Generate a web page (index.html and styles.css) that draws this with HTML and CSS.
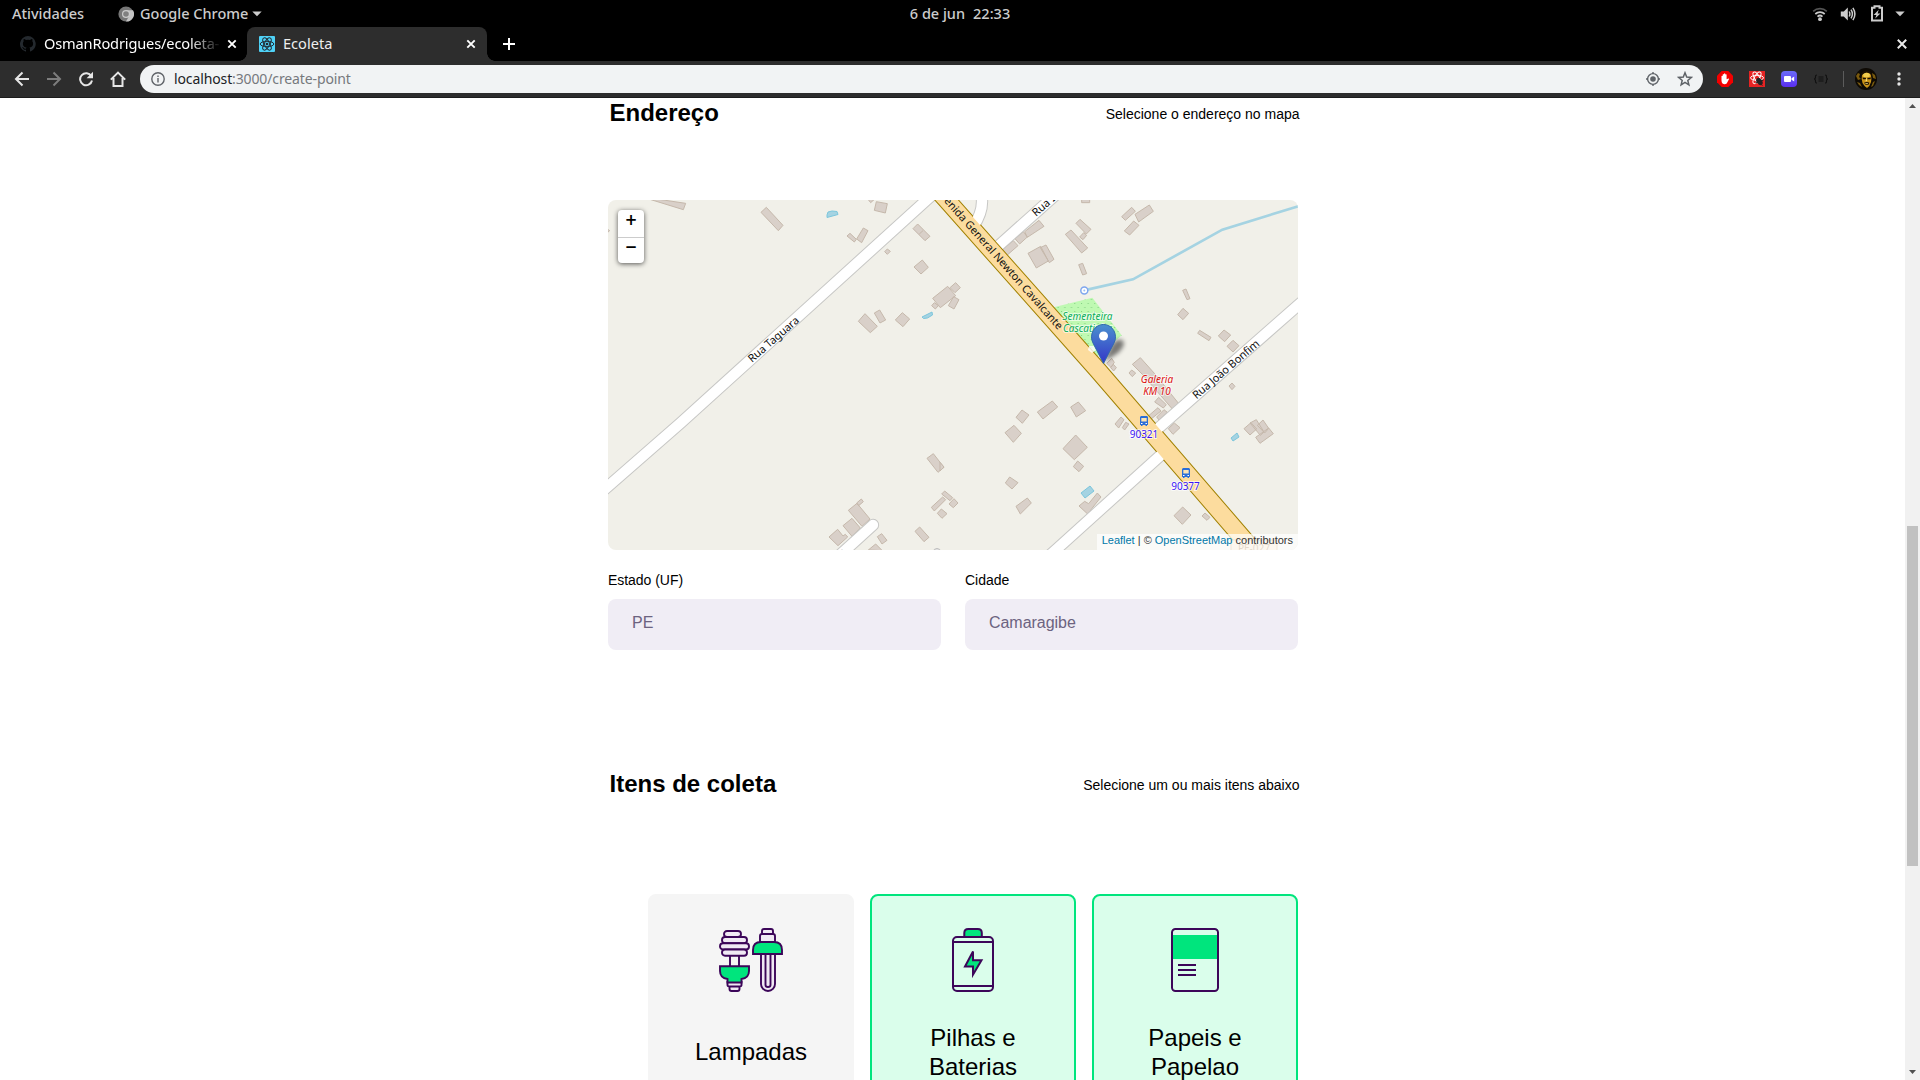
FILE: index.html
```html
<!DOCTYPE html>
<html lang="pt-BR">
<head>
<meta charset="utf-8">
<title>Ecoleta</title>
<link rel="stylesheet" href="styles.css">
</head>
<body>
<header class="topbar">
  <div class="topbar-left">
    <span class="activities">Atividades</span>
    <svg class="app-icon" width="16" height="16" viewBox="0 0 16 16"><circle cx="8" cy="8" r="7.6" fill="#777"/><path d="M8 4.2h7a7.6 7.6 0 0 1-7 11.4l3.4-6z" fill="#c4c4c4"/><circle cx="8" cy="8" r="4" fill="#ccc"/><circle cx="8" cy="8" r="2.8" fill="#808080"/></svg>
    <span class="app-name">Google Chrome</span>
    <svg class="caret" width="10" height="6" viewBox="0 0 10 6"><path d="M.3.5h9.4L5 5.2z" fill="#ccc"/></svg>
  </div>
  <div class="clock"><span>6 de jun</span><span>22:33</span></div>
  <div class="status">
    <svg width="16" height="16" viewBox="0 0 16 16" fill="none"><path d="M1.2 5.3a10 10 0 0 1 13.6 0" stroke="#555" stroke-width="1.7"/><path d="M3.3 8a7 7 0 0 1 9.4 0M5.5 10.6a3.8 3.8 0 0 1 5 0" stroke="#ccc" stroke-width="1.7"/><circle cx="8" cy="13.2" r="1.9" fill="#ccc"/></svg>
    <svg width="16" height="16" viewBox="0 0 16 16" fill="none" stroke="#ccc" stroke-width="1.5"><path d="M.8 5.5h3l4-4v13l-4-4h-3z" fill="#ccc" stroke="none"/><path d="M9.2 5.5q1.4 2.5 0 5M11 3.7q2.8 4.3 0 8.6M12.9 1.8q4 6.2 0 12.4"/></svg>
    <svg width="14" height="17" viewBox="0 0 14 17" fill="none"><path d="M2 2.8h2.5V1.3h5v1.5H12v12.7H2z" stroke="#ccc" stroke-width="2"/><path d="M8.7 4.8 3.6 10h2.8l-1.2 3.6L10.4 8.4H7.6z" fill="#ccc"/></svg>
    <svg width="10" height="6" viewBox="0 0 10 6"><path d="M.3.5h9.4L5 5.2z" fill="#ccc"/></svg>
  </div>
</header>

<nav class="tabs">
  <div class="tab tab-idle">
    <svg width="16" height="16" viewBox="0 0 16 16"><path fill="#24292e" d="M8 0a8 8 0 0 0-2.5 15.6c.4.1.5-.2.5-.4v-1.500c-2.200.5-2.700-1-2.700-1-.4-.9-.9-1.200-.9-1.200-.7-.5.1-.5.1-.5.8.1 1.200.8 1.200.8.7 1.300 1.900.9 2.300.7.1-.5.3-.9.5-1.100-1.800-.2-3.600-.9-3.600-4 0-.9.3-1.600.8-2.200-.1-.2-.4-1 .1-2.100 0 0 .7-.2 2.200.8a7.600 7.600 0 0 1 4 0c1.500-1 2.200-.8 2.200-.8.4 1.100.2 1.900.1 2.100.5.6.8 1.300.8 2.200 0 3.100-1.900 3.700-3.700 3.900.3.300.6.8.6 1.500v2.300c0 .2.100.5.500.4A8 8 0 0 0 8 0z"/></svg>
    <span class="tab-title tab-fade">OsmanRodrigues/ecoleta-</span>
    <svg class="tab-close" width="10" height="10" viewBox="0 0 10 10"><path d="m1.300 1.300 7.400 7.400m0-7.400L1.300 8.700" stroke="#fff" stroke-width="1.900"/></svg>
  </div>
  <div class="tab tab-active">
    <svg width="16" height="16" viewBox="0 0 16 16" fill="none" stroke="#222b33" stroke-width="1"><rect width="16" height="16" rx="1" fill="#4fd2f7" stroke="none"/><ellipse cx="8" cy="8" rx="6.800" ry="2.700"/><ellipse cx="8" cy="8" rx="6.800" ry="2.700" transform="rotate(60 8 8)"/><ellipse cx="8" cy="8" rx="6.800" ry="2.700" transform="rotate(120 8 8)"/><circle cx="8" cy="8" r="1.300" fill="#222b33" stroke="none"/></svg>
    <span class="tab-title">Ecoleta</span>
    <svg class="tab-close" width="10" height="10" viewBox="0 0 10 10"><path d="m1.300 1.300 7.400 7.400m0-7.400L1.300 8.700" stroke="#fff" stroke-width="1.900"/></svg>
  </div>
  <svg class="tab-new" width="12" height="12" viewBox="0 0 12 12"><path d="M6 0v12M0 6h12" stroke="#fff" stroke-width="2"/></svg>
  <svg class="window-close" width="10" height="10" viewBox="0 0 10 10"><path d="m.8.8 8.400 8.400m0-8.400L.8 9.200" stroke="#e8e8e8" stroke-width="2"/></svg>
</nav>

<div class="toolbar">
  <div class="nav-buttons">
    <svg width="16" height="16" viewBox="0 0 16 16" fill="none" stroke="#e6e6e6" stroke-width="2"><path d="M15 8H2.500M8.500 1.500 2 8l6.500 6.500"/></svg>
    <svg width="16" height="16" viewBox="0 0 16 16" fill="none" stroke="#7d7d7d" stroke-width="2"><path d="M1 8h12.500M7.500 1.500 14 8l-6.500 6.500"/></svg>
    <svg width="16" height="16" viewBox="0 0 16 16" fill="none" stroke="#e6e6e6" stroke-width="2"><path d="M13.300 5.200a6 6 0 1 0 .7 4.300"/><path d="M15 .8v6.400H8.600z" fill="#e6e6e6" stroke="none"/></svg>
    <svg width="16" height="16" viewBox="0 0 16 16" fill="none" stroke="#e6e6e6" stroke-width="2"><path d="M.8 8.600 8 1.600l7.200 7M3.500 7v8h9V7"/></svg>
  </div>
  <div class="omnibox">
    <svg width="14" height="14" viewBox="0 0 14 14" fill="none" stroke="#5f6368" stroke-width="1.400"><circle cx="7" cy="7" r="6.200"/><path d="M7 6v4.500M7 3.500v1.500"/></svg>
    <span class="url"><b>localhost</b>:3000/create-point</span>
    <svg class="locate" width="16" height="16" viewBox="0 0 16 16" fill="none" stroke="#5f6368" stroke-width="1.400"><circle cx="8" cy="8" r="5.400"/><circle cx="8" cy="8" r="2.800" fill="#5f6368" stroke="none"/><path d="M8 1v2M8 13v2M1 8h2M13 8h2"/></svg>
    <svg width="16" height="16" viewBox="0 0 16 16" fill="none" stroke="#5f6368" stroke-width="1.500"><path d="m8 1.800 1.700 4.300 4.600.3-3.500 3 1.100 4.500L8 11.400l-3.900 2.500 1.100-4.500-3.500-3 4.600-.3z"/></svg>
  </div>
  <div class="extensions">
    <svg width="16" height="16" viewBox="0 0 16 16"><path d="M4.700 0h6.600L16 4.700v6.600L11.300 16H4.700L0 11.300V4.700z" fill="#f40000"/><path d="M4.500 8V5q.6-.7 1.200 0V3.500q.7-.8 1.300 0v-.8q.7-.8 1.300 0v.9q.7-.7 1.300 0v4.700l1.800-.9q1 0 .7.700L9.700 12.500q-2 1.300-4.200 0-1-1-1-3z" fill="#fff"/></svg>
    <svg width="16" height="16" viewBox="0 0 16 16" fill="none" stroke="#fff" stroke-width="1"><path d="M0 0h16v16H0z" fill="#e62323" stroke="none"/><ellipse cx="8" cy="6.800" rx="6.500" ry="2.500"/><ellipse cx="8" cy="6.800" rx="6.500" ry="2.500" transform="rotate(60 8 6.800)"/><ellipse cx="8" cy="6.800" rx="6.500" ry="2.500" transform="rotate(120 8 6.800)"/><ellipse cx="10.500" cy="10.500" rx="2.600" ry="4" transform="rotate(-35 10.500 10.500)" fill="#222" stroke="none"/><path d="m6.500 12 8-3M7 9.500l6.500 5" stroke="#222"/></svg>
    <svg width="16" height="16" viewBox="0 0 16 16"><defs><linearGradient id="cam" x2="0" y2="1"><stop stop-color="#6b6cf7"/><stop offset="1" stop-color="#5a2df0"/></linearGradient></defs><rect width="16" height="16" rx="4" fill="url(#cam)"/><rect x="3" y="5" width="7" height="6" rx="1" fill="#fff"/><path d="m10.500 7.200 2.700-1.700v5l-2.700-1.700z" fill="#fff"/></svg>
    <svg width="16" height="16" viewBox="0 0 16 16" fill="none" stroke="#111" stroke-width="1.100"><path d="M4 4q-1.600 0-1.500 1.700Q2.600 8 1 8q1.600 0 1.500 2.300Q2.400 12 4 12M12 4q1.600 0 1.500 1.700Q13.400 8 15 8q-1.600 0-1.500 2.300Q13.600 12 12 12M5.500 6h5M5.500 8h5M5.500 10h5"/></svg>
    <span class="divider"></span>
    <svg class="avatar" width="22" height="22" viewBox="0 0 22 22"><circle cx="11" cy="11" r="11" fill="#0e0a04"/><path d="m1 8 2-3 2 1-1 3 2 2-3 1zM17 5l3 2 1 4-3-1zM2 14l3 1 2 4-3-2zM18 14l2-1-2 5-2 1z" fill="#7a5a0e"/><path d="M7 7q1-3 4.500-3T16 7q1 3 0 7-1 4-4 6-3-2-4.500-5Q6 11 7 7z" fill="#c99318"/><path d="M8 6q3-2.500 7 0l-.5 3h-6z" fill="#f2cd4e"/><path d="M7.500 9.500 11 10v1.200H8zM12.500 10l3.500-.5-.5 1.700h-3zM9 14.800q3-1.500 5.500 0l-1 2h-3zM6 6q3-5 8-3 4 2 3 8l-1.500-5Q11 2.500 7 7z" fill="#1a1004"/><path d="m11.200 9 1 4-1.700.4zM10 15.300h3.200l-.5.8h-2z" fill="#f7dc7a"/></svg>
    <svg class="menu-dots" width="4" height="14" viewBox="0 0 4 14" fill="#e6e6e6"><circle cx="2" cy="2" r="1.700"/><circle cx="2" cy="7" r="1.700"/><circle cx="2" cy="12" r="1.700"/></svg>
  </div>
</div>

<div class="viewport">
  <main class="form">
    <div class="legend legend-address">
      <h2>Endereço</h2>
      <span>Selecione o endereço no mapa</span>
    </div>

    <div class="map">
      <svg class="map-canvas" width="690" height="350" viewBox="608 200 690 350">
        <defs>
          <path id="taguara" d="M-150 1044 24 889 243 698 980 30l50-45"/>
          <path id="avenida" d="M-34-30 20 30 473 540 940 1081"/>
          <path id="ruaj" d="M178 165 380-15"/>
          <path id="curva" d="M126 10V36Q126 70 100 110"/>
          <path id="bonfim" d="M650 719 1073 347l60-52"/>
          <path id="baixo" d="M665 793 347 1080l-40 36"/>
          <path id="fim" d="M819 1005 700 1113"/>
          <path id="avenida-label" d="M-60-46 354 421l60 68"/>
          <pattern id="dots" width="20" height="24" patternUnits="userSpaceOnUse"><path d="M3 3h3v3H3zM13 15h3v3h-3z" fill="#7fce80"/></pattern>
          <linearGradient id="pin" x2="0" y2="1"><stop stop-color="#4a90cf"/><stop offset="1" stop-color="#3436c8"/></linearGradient>
          <filter id="soft" x="-50%" y="-50%" width="200%" height="200%"><feGaussianBlur stdDeviation="2.200"/></filter>
        </defs>
        <path d="M608 200h690v350H608z" fill="#f1f0e9"/>

        <g transform="translate(940 190) scale(.33333)">
          <path d="m335 353 122-30 88 113-78 66-60-48z" fill="#bff9b2"/>
          <path d="m335 353 122-30 88 113-78 66-60-48z" fill="url(#dots)"/>
          <path d="m442 299 137-31 268-149 240-74" fill="none" stroke="#a5d3e2" stroke-width="8"/>
        </g>

        <g class="building" transform="translate(600 190) scale(.33333)">
          <path d="m150 24 107 16-7 19-110-34zM483 67l16-15 50 54-14 16zM829 35l33 6-6 28-33-8zM804 28l8 10 10-9zM741 138l9-8 19 18-6 8zM770 147l20-33 14 8-19 36zM854 185l8-8 9 7-9 9zM939 116l14-14 37 37-15 13zM958 132l11-10M942 231l25-21 18 22-22 20zM1050 293l17-15 14 15-16 15zM998 325l45-36 24 28-46 36zM995 347l8-9 12 9-9 10zM1045 347l16-27 16 9-15 28zM775 394l20-23 37 38-21 19zM823 369l16-9 18 30-17 9zM886 390l21-22 22 19-20 23zM981 805l19-14 32 41-18 15zM1025 912l9-9 24 20-8 9zM1047 942l15-16 12 13-14 14zM994 952l34-31 9 8-34 34zM1012 970l12-13 17 14-15 14zM945 1024l14-13 28 31-15 13zM745 961l26-21 39 47-24 22zM770 939l14-12 6 8-14 12zM729 1007l27-22 25 29-25 25zM687 1041l26-23 16 20 7-5 7 8-29 26zM832 1040l13-9 16 20-15 11zM805 1080l22-18 20 20zM20 116l9 6-6 5z"/>
        </g>
        <g class="building" transform="translate(940 190) scale(.33333)">
          <path d="M425 20h24v18h-24zM545 80l30-28 11 12-30 27zM585 73l43-28 12 19-44 32zM553 123l28-30 16 13-28 29zM408 100l12-12 33 30-14 14zM419 141l12-13 9 8-11 13zM376 133l17-13 50 54-18 15zM254 125l43-34 15 18-50 33zM225 146l25-21 12 16-23 21zM186 180l34-28 14 15-32 28zM301 173l17-8 24 43-14 10zM264 190l38-21 23 44-36 21zM416 224l12-4 12 31-12 4zM728 301l10-4 12 29-9 3zM713 374l16-19 17 15-17 19zM773 430l6-9 34 21-6 10zM835 438l17-18 20 15-18 20zM861 469l18-18 18 16-18 19zM500 520l15-15 8 12-10 15zM512 533l8-10 9 10-8 10zM567 549l8-9 12 9-10 11zM577 523l24-20 43 48 74 92-21 14-90-104z"/>
        </g>
        <g class="building" transform="translate(940 370) scale(.33333)">
          <path d="M292 126l45-33 16 18-44 36zM392 111l23-15 22 26-28 19zM228 142l18-22 21 15-20 25zM195 188l27-22 22 24-24 27zM369 236l38-41 35 37-39 37zM400 290l13-17 18 16-14 16zM196 339l13-18 25 17-18 19zM228 409l34-25 12 15-33 33zM0 277l12 14-12 12zM417 408l17-14 12 7 26-32 11 12-27 34-12 18zM702 437l26-26 25 24-26 28zM786 438l9-9 15 13-9 9zM644 96l12-14 23 22-9 10zM626 137l28-24 9 10-32 26zM650 141l22-22 10 8-25 23zM685 176l18-17 17 14-21 20zM525 162l18-21 9 8-16 25zM547 173l10-16 10 5-13 18zM867 48l9-9 9 10-9 10zM912 176l21-18 17 19-20 18zM930 159l19-10 23 37-11 10zM952 166l17-16 17 25-12 14zM947 202l39-28 14 17-40 29z"/>
        </g>
        <g class="pond">
          <path d="m827 215 1-3 4-1 5 .5 1 3-11 3zM922 317l10-5 .5 3-5 3-4 .5z"/>
          <path d="m1081 493 9-7 4 5-9 7zM1231 438l6-5 2 4-6 4z"/>
        </g>

        <g fill="none" stroke-width="37" stroke="#c7c7c5">
          <g transform="translate(600 190) scale(.33333)"><use href="#taguara"/><use href="#fim" stroke-linecap="round"/></g>
          <g transform="translate(940 190) scale(.33333)"><use href="#ruaj"/><use href="#curva"/><use href="#bonfim"/><use href="#baixo"/><use href="#avenida" stroke="#a18100" stroke-width="56"/></g>
        </g>
        <g fill="none" stroke-width="31" stroke="#fff">
          <g transform="translate(600 190) scale(.33333)"><use href="#taguara"/><use href="#fim" stroke-linecap="round"/></g>
          <g transform="translate(940 190) scale(.33333)"><use href="#ruaj"/><use href="#curva"/><use href="#bonfim"/><use href="#baixo"/><use href="#avenida" stroke="#fcdc9e" stroke-width="50"/></g>
        </g>
        <circle cx="937" cy="552" r="3.500" fill="#e5e5e5" stroke="#bbb"/>

        <circle cx="1084.300" cy="290.500" r="3.500" fill="#fff" stroke="#7fa6ee" stroke-width="1.500"/><circle cx="1084.300" cy="290.500" r="1" fill="#9cbcf4"/>

        <g class="road-label">
          <text transform="translate(752 363) rotate(-41)" textLength="63.500">Rua Taguara</text>
          <g transform="translate(940 190) scale(.33333)"><text class="avenue-label"><textPath href="#avenida-label" startOffset="624" text-anchor="end">Avenida General Newton Cavalcante</textPath></text></g>
          <text transform="translate(1036 217) rotate(-41)">Rua I</text>
          <text transform="translate(1196.500 399.500) rotate(-40.700)" textLength="84">Rua João Bonfim</text>
          <text transform="translate(842 557) rotate(-41)">a</text>
        </g>
        <g class="place-label green"><text x="1087.500" y="319.500">Sementeira</text><text x="1087.500" y="331.500">Cascatinha</text></g>
        <g class="place-label red"><text x="1157" y="382.500">Galeria</text><text x="1157" y="394.500">KM 10</text></g>
        <g class="stop-label"><text x="1144" y="438">90321</text><text x="1185.500" y="490">90377</text></g>
        <g id="bus" fill="#2a6ed8"><path d="M1141 416h6l1 1v8h-1v1h-1.500v-1h-3v1h-1.500v-1h-1v-8z"/><path d="M1141.300 418h5.400v3.500h-5.400z" fill="#fbe3b4"/><path d="M1141 423h1.500v1H1141zM1145.500 423h1.500v1h-1.500z" fill="#fff"/></g>
        <use href="#bus" x="42" y="52"/>
        <g><path d="M1231 540h46v15h-46z" fill="#f6e3c8" stroke="#c9ad84"/><text x="1254" y="552" class="shield">PE-027</text></g>

        <path d="m1104 362 7-16q5-8 11-6 5 4-4 13z" fill="#000" opacity=".5" filter="url(#soft)"/>
        <path d="M1089 346h5l2 4-4 3-4-3z" fill="#fff" opacity=".8"/>
        <path d="M1103.500 363.500 1093 343a12 12.500 0 1 1 21 0z" fill="url(#pin)" stroke="#2f69ad" stroke-width="1"/>
        <circle cx="1103.500" cy="336" r="4.500" fill="#fff"/>
      </svg>
      <div class="zoom"><span>+</span><span>−</span></div>
      <div class="attribution"><a>Leaflet</a> | © <a>OpenStreetMap</a> contributors</div>
    </div>

    <div class="fields">
      <label>Estado (UF)<span class="select">PE</span></label>
      <label>Cidade<span class="select">Camaragibe</span></label>
    </div>

    <div class="legend legend-items">
      <h2>Itens de coleta</h2>
      <span>Selecione um ou mais itens abaixo</span>
    </div>

    <ul class="items">
      <li>
        <svg width="64" height="64" viewBox="0 0 64 64" fill="none" stroke="#3c0659" stroke-width="1.900">
          <g fill="#f0e9f4"><rect x="5" y="3" width="17" height="6" rx="3"/><rect x="3" y="9" width="25" height="6.300" rx="3"/><rect x="1" y="15.300" width="29" height="6.200" rx="3"/><rect x="3" y="21.500" width="25" height="6.300" rx="3"/></g>
          <path d="M11 28v10M20 28v10"/>
          <path d="M8.500 54v3q0 1.500 2 1.500V61q0 2 2 2h6q2 0 2-2v-2.500q2 0 2-1.500v-3zM10 58.500h11" fill="#f0e9f4"/>
          <path d="M1 38.300h29V43q0 7-7.500 8v3.500h-14V51Q1 50 1 43z" fill="#00e57d"/>
          <path d="M42 26h14v30a7 7 0 0 1-14 0z" fill="#f0e9f4"/><path d="M46.500 26v31q0 2 2.500 2t2.500-2V26"/>
          <path d="M43 6V3q0-2 2-2h7q2 0 2 2v3q2 0 2 2v6H41V8q0-2 2-2zM43 6h11" fill="#f0e9f4"/>
          <path d="M34 26v-4q0-8 8-8h13q8 0 8 8v4z" fill="#00e57d"/>
        </svg>
        <span class="item-title item-single">Lampadas</span>
      </li>
      <li class="selected">
        <svg width="64" height="64" viewBox="0 0 64 64" fill="none" stroke="#3c0659" stroke-width="2">
          <path d="M23.300 9V5q0-4 4-4h9.500q4 0 4 4v4z" fill="#00e57d"/>
          <rect x="12" y="9" width="40" height="54" rx="4"/><path d="M12 14h40M12 58h40"/>
          <path d="M32 23.500v8.800h8.500L32 46.700v-8.200h-8z" fill="#00e57d"/>
        </svg>
        <span class="item-title">Pilhas e Baterias</span>
      </li>
      <li class="selected">
        <svg width="64" height="64" viewBox="0 0 64 64" fill="none" stroke="#3c0659" stroke-width="2">
          <path d="M10 7h44v24H10z" fill="#00e57d" stroke="none"/>
          <rect x="9" y="1" width="46" height="62" rx="3.500"/><path d="M15 37h18M15 42h18M15 47h18"/>
        </svg>
        <span class="item-title">Papeis e Papelao</span>
      </li>
    </ul>
  </main>
  <div class="scrollbar">
    <svg width="7" height="4" viewBox="0 0 7 4"><path d="M3.500 0 7 4H0z" fill="#505050"/></svg>
    <div class="track"><div class="thumb"></div></div>
    <svg width="7" height="4" viewBox="0 0 7 4"><path d="M3.500 4 7 0H0z" fill="#505050"/></svg>
  </div>
</div>
</body>
</html>
```
FILE: styles.css
```css
* { box-sizing: border-box; margin: 0; padding: 0; }
html, body { height: 1080px; overflow: hidden; }
body { display: flex; flex-direction: column; background: #fff; font-family: "Liberation Sans", Arial, sans-serif; color: #000; }
svg { display: block; flex: none; }

/* desktop bar */
.topbar { height: 27px; flex: none; display: grid; grid-template-columns: 1fr auto 1fr; align-items: center; background: #000; color: #ccc; font: 500 14.500px/27px "Noto Sans", sans-serif; }
.topbar-left { display: flex; align-items: center; padding-left: 12px; }
.activities { width: 106px; }
.app-name { margin: 0 5px 0 6px; width: 107px; white-space: nowrap; }
.clock { display: flex; gap: 8px; }
.status { display: flex; align-items: center; justify-content: flex-end; padding-right: 15px; }
.status svg:nth-child(1) { margin-right: 12px; }
.status svg:nth-child(2) { margin-right: 14px; }
.status svg:nth-child(3) { margin-right: 11px; }

/* browser tabs */
.tabs { height: 34px; flex: none; display: flex; align-items: center; background: #000; color: #fff; font: 14.600px/32px "Noto Sans", sans-serif; }
.tab { height: 34px; display: flex; align-items: center; }
.tab-idle { width: 247px; padding: 0 10px 0 20px; }
.tab-active { position: relative; width: 240px; padding: 0 11px 0 12px; background: #2d2d2d; border-radius: 8px 8px 0 0; color: #eee; }
.tab-active::before, .tab-active::after { content: ""; position: absolute; bottom: 0; width: 8px; height: 8px; }
.tab-active::before { left: -8px; background: radial-gradient(circle at 0 0, transparent 7.500px, #2d2d2d 8px); }
.tab-active::after { right: -8px; background: radial-gradient(circle at 100% 0, transparent 7.500px, #2d2d2d 8px); }
.tab-title { height: 34px; margin-left: 8px; flex: 1; white-space: nowrap; overflow: hidden; }
.tab-fade { letter-spacing: -.15px; -webkit-mask-image: linear-gradient(90deg, #000 82%, transparent); mask-image: linear-gradient(90deg, #000 82%, transparent); }
.tab-idle .tab-close { margin-left: 6px; }
.tab-new { margin-left: 16px; }
.window-close { margin: 0 13px 0 auto; }

/* address bar */
.toolbar { height: 37px; flex: none; display: flex; align-items: center; background: #2d2d2d; border-bottom: 1px solid #1c1c1c; }
.nav-buttons { display: flex; gap: 16px; width: 140px; padding-left: 14px; }
.omnibox { width: 1563px; height: 28px; display: flex; align-items: center; padding: 0 10px 0 11px; border-radius: 14px; background: #f1f3f4; }
.url { margin-left: 9px; color: #76797d; font: 14px/28px "Noto Sans", sans-serif; letter-spacing: -.12px; }
.url b { font-weight: 400; color: #202124; }
.locate { margin: 0 16px 0 auto; }
.extensions { flex: 1; display: flex; align-items: center; gap: 16px; padding-left: 14px; }
.divider { width: 1px; height: 16px; background: #5c5c5c; margin-left: -2px; }
.avatar { margin-left: -5px; }
.menu-dots { margin-left: 4px; }

/* page */
.viewport { flex: 1; min-height: 0; display: flex; overflow: hidden; }
.form { width: 690px; margin: 0 607px 0 608px; flex: none; }
.legend { display: flex; justify-content: space-between; align-items: center; height: 28px; margin-left: 1.500px; width: 690px; }
.legend h2 { font-size: 24px; line-height: 28px; }
.legend span { font-size: 14px; line-height: 16px; }
.legend-address h2 { padding-top: 2px; }
.legend-address span { padding-top: 3px; }
.legend-items { margin-top: 120px; }
.legend-items span { padding-top: 1px; }

.map { position: relative; width: 690px; height: 350px; margin-top: 74px; border-radius: 8px; overflow: hidden; }
.building path { fill: #d9d0c9; stroke: #c5b8ab; stroke-width: 3; }
.pond path { fill: #a5d3e2; stroke: #7cc6dc; stroke-width: 1; }
.map text { font-family: "Noto Sans", sans-serif; }
.road-label { font-size: 11px; fill: #111; }
.avenue-label { font-size: 32.700px; }
.place-label { font-size: 10px; font-style: italic; text-anchor: middle; paint-order: stroke; stroke: rgba(255, 255, 255, .65); stroke-width: 2px; }
.green { fill: #0cae5a; }
.red { fill: #dc1010; }
.stop-label { font-size: 10px; fill: #3a15f5; text-anchor: middle; paint-order: stroke; stroke: rgba(255, 255, 255, .7); stroke-width: 2px; }
.shield { font-size: 10px; fill: #a08050; text-anchor: middle; }
.zoom { position: absolute; left: 10px; top: 10px; width: 26px; border-radius: 4px; background: #fff; box-shadow: 0 1px 5px rgba(0, 0, 0, .65); }
.zoom span { display: block; height: 27px; text-align: center; font: bold 15px/21px "DejaVu Sans", sans-serif; }
.zoom span + span { height: 26px; border-top: 1px solid #ccc; line-height: 19px; }
.attribution { position: absolute; right: 0; bottom: 0; height: 16px; padding: 0 5px; background: rgba(255, 255, 255, .7); color: #333; font-size: 11px; line-height: 13px; white-space: nowrap; }
.attribution a { color: #0078a8; }

.fields { display: grid; grid-template-columns: 1fr 1fr; gap: 24px; margin-top: 22px; }
.fields label { font-size: 14px; line-height: 16px; letter-spacing: -.04px; }
.select { display: block; height: 51px; margin-top: 11px; padding: 15px 24px 0; border-radius: 8px; background: #f0edf5; color: #6c6380; font-size: 16px; line-height: 18px; }

.items { display: grid; grid-template-columns: repeat(3, 1fr); gap: 16px; margin-top: 96px; padding-left: 40px; list-style: none; }
.items li { height: 230px; display: flex; flex-direction: column; align-items: center; padding: 32px 24px; border: 2px solid #f5f5f5; border-radius: 8px; background: #f5f5f5; font-size: 24px; line-height: 29px; text-align: center; }
.items .selected { background: #dafeeb; border-color: #00e57d; }
.item-title { height: 58px; margin-top: 31px; width: 110px; display: flex; align-items: center; justify-content: center; }
.item-single { margin-top: 30px; }

.scrollbar { width: 15px; display: flex; flex-direction: column; align-items: center; padding: 6px 0; background: #f1f1f1; }
.track { flex: 1; padding-top: 418px; }
.thumb { width: 11px; height: 340px; background: #c1c1c1; }
```
